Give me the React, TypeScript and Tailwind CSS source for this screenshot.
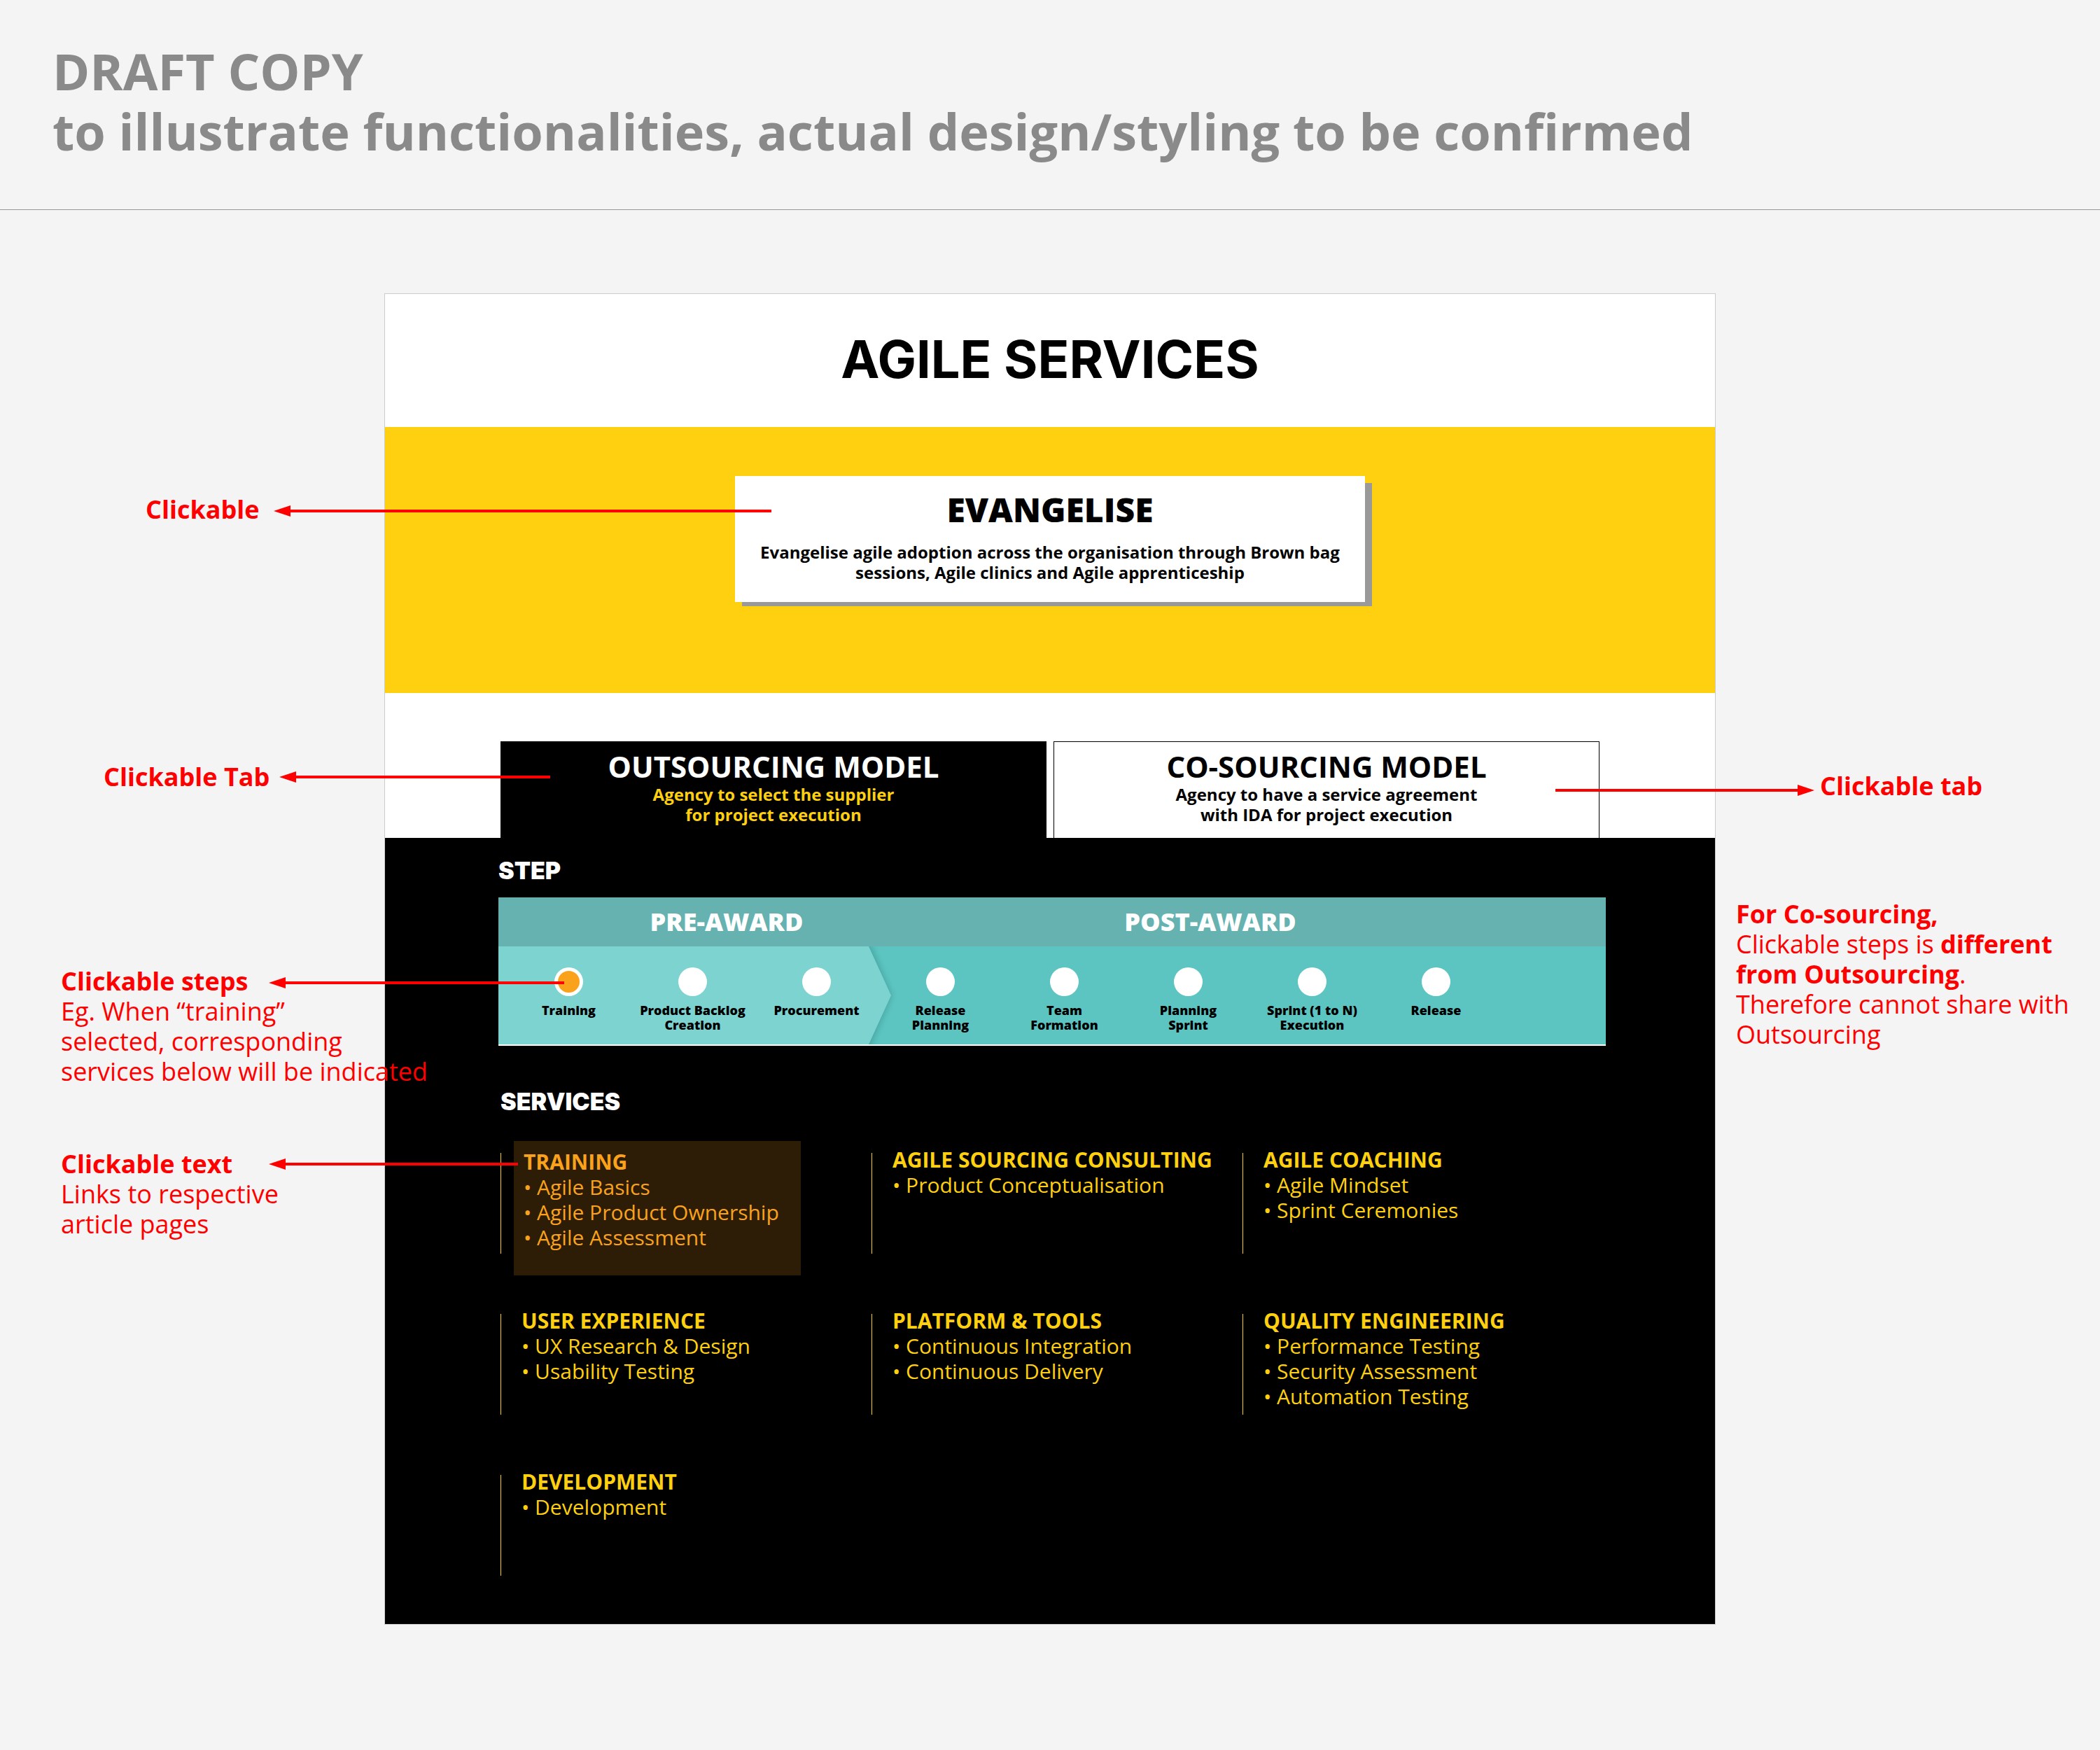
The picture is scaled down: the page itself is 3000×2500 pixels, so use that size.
import { useState, type ReactNode } from "react";

type Service = { title: string; items: string[] };

const STEPS: string[][] = [
  ["Training"],
  ["Product Backlog", "Creation"],
  ["Procurement"],
  ["Release", "Planning"],
  ["Team", "Formation"],
  ["Planning", "Sprint"],
  ["Sprint (1 to N)", "Execution"],
  ["Release"],
];

const SERVICES: Service[] = [
  { title: "TRAINING", items: ["Agile Basics", "Agile Product Ownership", "Agile Assessment"] },
  { title: "AGILE SOURCING CONSULTING", items: ["Product Conceptualisation"] },
  { title: "AGILE COACHING", items: ["Agile Mindset", "Sprint Ceremonies"] },
  { title: "USER EXPERIENCE", items: ["UX Research & Design", "Usability Testing"] },
  { title: "PLATFORM & TOOLS", items: ["Continuous Integration", "Continuous Delivery"] },
  { title: "QUALITY ENGINEERING", items: ["Performance Testing", "Security Assessment", "Automation Testing"] },
  { title: "DEVELOPMENT", items: ["Development"] },
];

function Arrow({ length, right = false, className }: { length: number; right?: boolean; className: string }) {
  return (
    <svg
      aria-hidden="true"
      width={length}
      height={16}
      viewBox={`0 0 ${length} 16`}
      className={`block shrink-0 fill-[#ff0000] ${className}`}
    >
      {right ? (
        <path d={`M0 6H${length - 24}V0L${length} 8L${length - 24} 16V10H0Z`} />
      ) : (
        <path d={`M0 8L24 0V6H${length}V10H24V16Z`} />
      )}
    </svg>
  );
}

/* A red note with an arrow that runs over the panel to what it describes. */
function Callout({ className, label, children }: { className: string; label: ReactNode; children: ReactNode }) {
  return (
    <div className={`flex items-start whitespace-nowrap ${className}`}>
      {label}
      {children}
    </div>
  );
}

function ModelTab({
  title,
  lines,
  active,
  onSelect,
}: {
  title: string;
  lines: string[];
  active: boolean;
  onSelect: () => void;
}) {
  return (
    <button
      type="button"
      role="tab"
      aria-selected={active}
      onClick={onSelect}
      className={`border border-b-0 border-black pt-2.5 pb-[19px] text-center ${
        active ? "bg-black text-white" : "bg-white text-black"
      }`}
    >
      <span className="block text-[42px] leading-[50px] font-bold">{title}</span>
      <span className={`block text-2xl leading-[29px] font-bold ${active ? "text-[#fed00f]" : ""}`}>
        {lines[0]}
        <br />
        {lines[1]}
      </span>
    </button>
  );
}

function ServiceBlock({ service, highlighted }: { service: Service; highlighted: boolean }) {
  return (
    <article className="flex min-h-[152px] items-start">
      <span className="mt-2 h-36 w-px shrink-0 bg-[#fed00f]" />
      <div
        className={
          highlighted
            ? "-mt-[9px] -mb-[31px] ml-[18px] w-[410px] bg-[#2d1d06] px-3.5 pt-3 pb-9 text-[#faa21b]"
            : "ml-[29px] text-[#fed00f]"
        }
      >
        <h3 className="text-[30px] leading-9 font-bold whitespace-nowrap">{service.title}</h3>
        <ul>
          {service.items.map((item) => (
            <li key={item} className="text-[30px] leading-9 whitespace-nowrap">
              <a href="#">• {item}</a>
            </li>
          ))}
        </ul>
      </div>
    </article>
  );
}

export default function App() {
  const [model, setModel] = useState(0);
  const [step, setStep] = useState(0);

  return (
    <div className="min-h-screen overflow-x-hidden bg-[#f4f4f4] font-['Open_Sans',sans-serif] text-black">
      <header className="border-b border-[#999999] pt-[58px] pb-[69px] pl-[75px]">
        <p className="text-[72px] leading-[86px] font-bold text-[#8a8a8a]">
          DRAFT COPY
          <br />
          to illustrate functionalities, actual design/styling to be confirmed
        </p>
      </header>

      <div className="grid grid-cols-[549fr_1902fr_549fr]">
        <aside className="relative z-10 flex min-w-0 flex-col pt-[406px] text-4xl leading-[43px] text-[#ff0000]">
          <Callout className="ml-[208px]" label={<strong className="w-[183px] shrink-0">Clickable</strong>}>
            <Arrow length={711} className="mt-4" />
          </Callout>
          <Callout className="mt-[339px] ml-[148px]" label={<strong className="w-[251px] shrink-0">Clickable Tab</strong>}>
            <Arrow length={387} className="mt-3.5" />
          </Callout>
          <div className="mt-[249px] ml-[87px]">
            <Callout className="" label={<strong className="w-[297px] shrink-0">Clickable steps</strong>}>
              <Arrow length={422} className="mt-4" />
            </Callout>
            <p className="whitespace-nowrap">
              Eg. When “training”
              <br />
              selected, corresponding
              <br />
              services below will be indicated
            </p>
          </div>
          <div className="mt-[89px] ml-[87px]">
            <Callout className="" label={<strong className="w-[297px] shrink-0">Clickable text</strong>}>
              <Arrow length={356} className="mt-3.5" />
            </Callout>
            <p className="whitespace-nowrap">
              Links to respective
              <br />
              article pages
            </p>
          </div>
        </aside>

        <main className="mt-[119px] border border-[#cccccc] bg-white">
          <h1 className="pt-[53px] pb-[57px] text-center font-['Inter',sans-serif] text-[74px] leading-[80px] font-bold">
            AGILE SERVICES
          </h1>

          <section className="flex justify-center bg-[#fed00f] pt-[70px] pb-[130px]">
            <button type="button" className="relative isolate w-full max-w-[900px] text-center">
              <span className="absolute top-2.5 -right-2.5 -bottom-1.5 left-2.5 -z-20 bg-[#999999]" />
              <span className="block bg-white pt-[18px] pb-7">
                <span className="block text-5xl leading-[60px] font-extrabold">EVANGELISE</span>
                <span className="block pt-4 text-2xl leading-[29px] font-bold">
                  Evangelise agile adoption across the organisation through Brown bag
                  <br />
                  sessions, Agile clinics and Agile apprenticeship
                </span>
              </span>
            </button>
          </section>

          <div role="tablist" className="grid grid-cols-2 gap-2.5 px-[165px] pt-[69px]">
            <ModelTab
              title="OUTSOURCING MODEL"
              lines={["Agency to select the supplier", "for project execution"]}
              active={model === 0}
              onSelect={() => setModel(0)}
            />
            <ModelTab
              title="CO-SOURCING MODEL"
              lines={["Agency to have a service agreement", "with IDA for project execution"]}
              active={model === 1}
              onSelect={() => setModel(1)}
            />
          </div>

          <div className="bg-black pt-[27px] pb-[69px]">
            <section className="pr-[156px] pl-[162px]">
              <h2 className="font-['Inter',sans-serif] text-[34px] leading-10 font-black text-white">STEP</h2>
              <div className="mt-[18px] border-b-2 border-white bg-[#5dc5c1]">
                <div className="grid grid-cols-[652fr_730fr_200fr] bg-[#65b2b0] py-[11px] text-center text-4xl leading-[48px] font-extrabold text-white">
                  <h3>PRE-AWARD</h3>
                  <h3>POST-AWARD</h3>
                </div>
                <div className="relative isolate">
                  <svg
                    aria-hidden="true"
                    width="580"
                    height="140"
                    viewBox="0 0 580 140"
                    className="absolute top-0 left-0 -z-10"
                  >
                    <defs>
                      <filter id="edge" x="-5%" y="-20%" width="110%" height="140%">
                        <feGaussianBlur stdDeviation="4" />
                      </filter>
                    </defs>
                    <path d="M0 -20H525L563 70L525 160H0Z" fill="#4aa9a6" filter="url(#edge)" />
                    <path d="M0 0H529L561 70L529 140H0Z" fill="#7cd3d0" />
                  </svg>
                  <div className="grid min-h-[140px] grid-cols-8 pr-[154px] pl-3">
                    {STEPS.map((lines, i) => (
                      <button
                        key={i}
                        type="button"
                        aria-pressed={step === i}
                        onClick={() => setStep(i)}
                        className="flex flex-col items-center pt-[30px]"
                      >
                        <span className="flex size-[41px] items-center justify-center rounded-full bg-white">
                          {step === i && <span className="size-[31px] rounded-full bg-[#faa21b]" />}
                        </span>
                        <span className="mt-2.5 text-lg leading-[21px] font-extrabold whitespace-nowrap">
                          {lines[0]}
                          {lines[1] && <br />}
                          {lines[1]}
                        </span>
                      </button>
                    ))}
                  </div>
                </div>
              </div>
            </section>

            <section className="pt-[60px] pr-[145px] pl-[165px]">
              <h2 className="font-['Inter',sans-serif] text-[34px] leading-10 font-black text-white">SERVICES</h2>
              <div className="mt-[45px] grid grid-cols-3 gap-y-[78px]">
                {SERVICES.map((service, i) => (
                  <ServiceBlock key={service.title} service={service} highlighted={i === 0 && step === 0} />
                ))}
              </div>
            </section>
          </div>
        </main>

        <aside className="relative z-10 min-w-0 pt-[801px] text-4xl leading-[43px] text-[#ff0000]">
          <Callout className="-ml-[229px]" label={<Arrow right length={370} className="mt-5" />}>
            <strong className="ml-2">Clickable tab</strong>
          </Callout>
          <p className="mt-[140px] ml-[29px] whitespace-nowrap">
            <strong>For Co-sourcing,</strong>
            <br />
            Clickable steps is <strong>different</strong>
            <br />
            <strong>from Outsourcing</strong>.
            <br />
            Therefore cannot share with
            <br />
            Outsourcing
          </p>
        </aside>
      </div>
    </div>
  );
}
